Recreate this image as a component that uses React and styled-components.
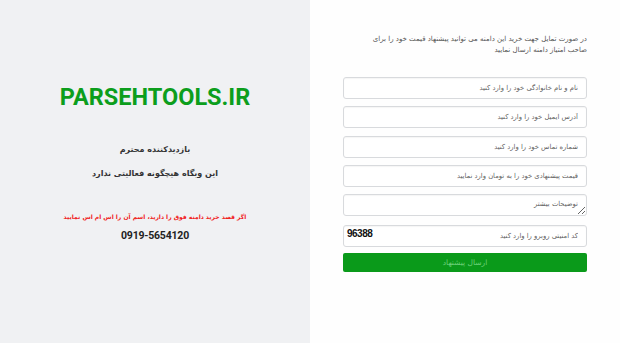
import React from 'react';
import styled, { createGlobalStyle } from 'styled-components';

const GlobalStyle = createGlobalStyle`
  html, body {
    margin: 0;
    padding: 0;
    height: 100%;
  }
  body {
    font-family: 'DejaVu Sans', 'Noto Sans', sans-serif;
    background: #fefefe;
  }
  #root {
    height: 100%;
  }
`;

const Page = styled.div`
  display: grid;
  grid-template-columns: 310px 310px;
  height: 343px;
  overflow: hidden;
`;

const InfoPanel = styled.div`
  background: #f0f1f3;
  display: flex;
  flex-direction: column;
  align-items: center;
  padding-top: 82px;
`;

const Domain = styled.h1`
  margin: 0;
  font-family: Roboto, 'Liberation Sans', sans-serif;
  font-weight: 700;
  font-size: 23.5px;
  line-height: 30px;
  color: #0c9e1c;
`;

const Line = styled.p`
  margin: ${(p) => p.$top}px 0 0;
  direction: rtl;
  font-weight: 700;
  font-size: ${(p) => p.$size || 8}px;
  line-height: 12px;
  color: ${(p) => p.$color || '#333'};
`;

const Phone = styled.p`
  margin: 6px 0 0;
  font-family: Roboto, 'Liberation Sans', sans-serif;
  font-weight: 700;
  font-size: 10.5px;
  line-height: 14px;
  letter-spacing: -0.2px;
  color: #222;
`;

const FormPanel = styled.form`
  display: flex;
  flex-direction: column;
  padding: 34px 33px 0;
  direction: rtl;
`;

const Intro = styled.p`
  margin: 0 0 21px;
  font-size: 7px;
  line-height: 11px;
  color: #555;
  text-align: right;
  white-space: nowrap;
`;

const Fields = styled.div`
  display: flex;
  flex-direction: column;
  gap: 7.3px;
`;

const fieldBase = `
  box-sizing: border-box;
  width: 100%;
  height: 22px;
  border: 1px solid #d8dadd;
  border-radius: 3px;
  background: #fff;
  box-shadow: inset 0 1px 1px rgba(0, 0, 0, 0.04);
  padding: 0 8px;
  font-family: 'DejaVu Sans', sans-serif;
  font-size: 6.8px;
  color: #444;
  outline: none;
  &::placeholder {
    color: #5f5f5f;
  }
`;

const Input = styled.input`
  ${fieldBase}
  direction: rtl;
`;

const TextArea = styled.textarea`
  ${fieldBase}
  display: block;
  padding-top: 5px;
  direction: ltr;
  text-align: right;
  resize: vertical;
  overflow: hidden;
`;

const CaptchaRow = styled.div`
  position: relative;
`;

const CaptchaCode = styled.span`
  position: absolute;
  left: 4px;
  top: 5px;
  direction: ltr;
  font-family: 'Liberation Sans', sans-serif;
  font-weight: 700;
  font-size: 10px;
  letter-spacing: -0.5px;
  color: #111;
`;

const Submit = styled.button`
  margin-top: 6px;
  height: 19px;
  border: 0;
  border-radius: 2px;
  background: #0a9a1a;
  color: #6bd078;
  font-family: 'DejaVu Sans', sans-serif;
  font-size: 7.5px;
  cursor: pointer;
`;

export default function App() {
  return (
    <>
      <GlobalStyle />
      <Page>
        <InfoPanel>
          <Domain>PARSEHTOOLS.IR</Domain>
          <Line $top={32}>بازدیدکننده محترم</Line>
          <Line $top={12}>این وبگاه هیچگونه فعالیتی ندارد</Line>
          <Line $top={31} $size={6} $color="#f01c1c">
            اگر قصد خرید دامنه فوق را دارید، اسم آن را اس ام اس نمایید
          </Line>
          <Phone>0919-5654120</Phone>
        </InfoPanel>
        <FormPanel onSubmit={(e) => e.preventDefault()}>
          <Intro>
            در صورت تمایل جهت خرید این دامنه می توانید پیشنهاد قیمت خود را برای
            <br />
            صاحب امتیاز دامنه ارسال نمایید
          </Intro>
          <Fields>
            <Input placeholder="نام و نام خانوادگی خود را وارد کنید" />
            <Input placeholder="آدرس ایمیل خود را وارد کنید" />
            <Input placeholder="شماره تماس خود را وارد کنید" />
            <Input placeholder="قیمت پیشنهادی خود را به تومان وارد نمایید" />
            <TextArea placeholder="توضیحات بیشتر" />
            <CaptchaRow>
              <Input placeholder="کد امنیتی روبرو را وارد کنید" />
              <CaptchaCode>96388</CaptchaCode>
            </CaptchaRow>
          </Fields>
          <Submit type="submit">ارسال پیشنهاد</Submit>
        </FormPanel>
      </Page>
    </>
  );
}
